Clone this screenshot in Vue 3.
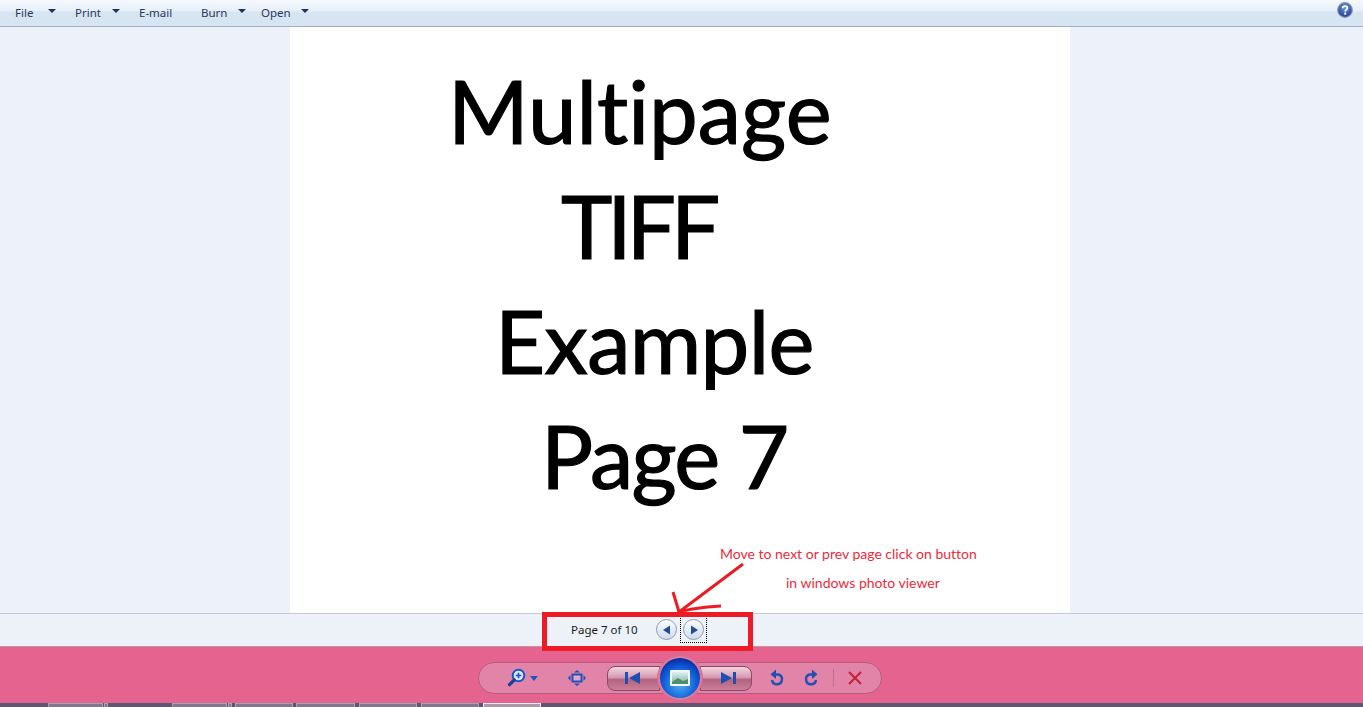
<script setup>
const menus = [
  { label: 'File', width: 60, caret: true, gap: 15 },
  { label: 'Print', width: 64, caret: true, gap: 11 },
  { label: 'E-mail', width: 62, caret: false, gap: 0 },
  { label: 'Burn', width: 60, caret: true, gap: 11 },
  { label: 'Open', width: 60, caret: true, gap: 10 }
]
const lines = [
  { text: 'Multipage', cls: 'l1' },
  { text: 'TIFF', cls: 'l2' },
  { text: 'Example', cls: 'l3' },
  { text: 'Page 7', cls: 'l4' }
]
const tabs = [
  [48, 55], [104, 4], [172, 55], [228, 4], [235, 58], [296, 59], [359, 58], [421, 58], [483, 58]
]
</script>

<template>
  <div class="viewer">
    <header class="menubar">
      <nav class="menus">
        <div v-for="m in menus" :key="m.label" class="menu" :style="{ width: m.width + 'px' }">
          <span>{{ m.label }}</span>
          <i v-if="m.caret" class="caret" :style="{ marginLeft: m.gap + 'px' }"></i>
        </div>
      </nav>
      <svg class="help" width="16" height="16" viewBox="0 0 16 16">
        <defs>
          <radialGradient id="hg" cx="50%" cy="35%" r="70%">
            <stop offset="0" stop-color="#6f9ae0" />
            <stop offset="1" stop-color="#16308f" />
          </radialGradient>
        </defs>
        <circle cx="8" cy="8" r="7.3" fill="url(#hg)" stroke="#8a93a6" stroke-width="1.2" />
        <path d="M5.6 6.2C5.7 4.9 6.7 4.2 8 4.2c1.4 0 2.4.8 2.4 1.9 0 1.8-2.2 1.7-2.2 3.3" fill="none" stroke="#fff" stroke-width="1.7" />
        <rect x="7.2" y="10.6" width="2" height="2" fill="#fff" />
      </svg>
    </header>

    <main class="stage">
      <section class="page">
        <div v-for="l in lines" :key="l.text" class="line" :class="l.cls">{{ l.text }}</div>
      </section>
    </main>

    <div class="pager">
      <span class="count">Page 7 of 10</span>
      <button class="round">
        <svg width="10" height="10" viewBox="0 0 10 10"><path d="M8 0.5V9.5L1 5Z" fill="#1d4f91" /></svg>
      </button>
      <span class="focus">
        <button class="round">
          <svg width="10" height="10" viewBox="0 0 10 10"><path d="M2 0.5V9.5L9 5Z" fill="#1d4f91" /></svg>
        </button>
      </span>
    </div>

    <footer class="controls">
      <div class="pill">
        <div class="zoom">
          <svg width="20" height="20" viewBox="0 0 20 20">
            <circle cx="11.5" cy="7.5" r="5.8" fill="#dce9fa" stroke="#1a55c8" stroke-width="2" />
            <path d="M8.7 7.5h5.6M11.5 4.7v5.6" stroke="#1a55c8" stroke-width="1.7" />
            <path d="M7.2 12L2.5 16.7" stroke="#1c3f96" stroke-width="3.2" stroke-linecap="round" />
          </svg>
          <svg width="8" height="5" viewBox="0 0 8 5"><path d="M0 0H8L4 5Z" fill="#2255c4" /></svg>
        </div>
        <svg class="fit" width="18" height="16" viewBox="0 0 18 16">
          <path d="M6 2.5H12L9 0ZM6 13.5H12L9 16ZM2.5 5V11L0 8ZM15.5 5V11L18 8Z" fill="#1f50c0" />
          <rect x="4.5" y="4.5" width="9" height="7" fill="#e7a6c0" stroke="#1f50c0" stroke-width="2" />
        </svg>
        <div class="transport">
          <button class="seg left">
            <svg width="16" height="12" viewBox="0 0 16 12"><path d="M0 0H3V12H0ZM15 0V12L4 6Z" fill="#1a4fb4" /></svg>
          </button>
          <div class="play">
            <div class="orb">
              <svg width="20" height="16" viewBox="0 0 20 16">
                <defs>
                  <linearGradient id="sky" x1="0" y1="0" x2="0" y2="1">
                    <stop offset="0" stop-color="#dff0f5" />
                    <stop offset="1" stop-color="#7fb59a" />
                  </linearGradient>
                </defs>
                <rect width="20" height="16" rx="1" fill="#f4f7f8" />
                <rect x="2" y="2" width="16" height="12" fill="url(#sky)" />
                <path d="M2 12L8 8L13 11L18 9V14H2Z" fill="#4f8f6c" />
              </svg>
            </div>
          </div>
          <button class="seg right">
            <svg width="16" height="12" viewBox="0 0 16 12"><path d="M16 0H13V12H16ZM1 0V12L12 6Z" fill="#1a4fb4" /></svg>
          </button>
        </div>
        <svg class="rot" width="16" height="18" viewBox="0 0 16 18">
          <path d="M5 5.5H9.5A5 5 0 1 1 3 11" fill="none" stroke="#1f4fb8" stroke-width="2.4" />
          <path d="M7 0.5V10L1.5 5.3Z" fill="#1f4fb8" />
        </svg>
        <svg class="rot r2" width="16" height="18" viewBox="0 0 16 18">
          <path d="M11 5.5H6.5A5 5 0 1 0 13 11" fill="none" stroke="#1f4fb8" stroke-width="2.4" />
          <path d="M9 0.5V10L14.5 5.3Z" fill="#1f4fb8" />
        </svg>
        <i class="divider"></i>
        <svg class="close" width="14" height="14" viewBox="0 0 14 14">
          <path d="M1 1L13 13M13 1L1 13" stroke="#c0213c" stroke-width="2" />
        </svg>
      </div>
    </footer>

    <div class="taskbar">
      <i v-for="(t, i) in tabs" :key="i" class="tab" :class="{ active: i === 8 }" :style="{ left: t[0] + 'px', width: t[1] + 'px' }"></i>
    </div>

    <div class="note n1">Move to next or prev page click on button</div>
    <div class="note n2">in windows photo viewer</div>
    <div class="redbox"></div>
    <svg class="arrow" width="90" height="60" viewBox="0 0 90 60">
      <path d="M75 3L11 51M11 51L5 31M11 51C24 47 38 46 53 45" fill="none" stroke="#ed1c24" stroke-width="3" />
    </svg>
  </div>
</template>

<style>
html, body { margin: 0; background: #fff; }
</style>

<style scoped>
.viewer {
  position: relative;
  width: 1363px;
  height: 707px;
  overflow: hidden;
  display: flex;
  flex-direction: column;
  background: #ecf1fa;
  font-family: "Noto Sans", "Open Sans", sans-serif;
}
.menubar {
  height: 26px;
  flex: none;
  display: flex;
  align-items: flex-start;
  justify-content: space-between;
  border-bottom: 1px solid #9fb0c6;
  background: linear-gradient(#f5f9fd 0, #e6eff8 11px, #d7e4f2 12px, #d7e4f2 100%);
}
.menus {
  display: flex;
  padding: 4px 0 0 15px;
}
.menu {
  display: flex;
  align-items: center;
  height: 16px;
  font-size: 11.5px;
  color: #2b3a5c;
  white-space: nowrap;
}
.caret {
  width: 0;
  height: 0;
  border-left: 4px solid transparent;
  border-right: 4px solid transparent;
  border-top: 4px solid #1f3158;
  margin-top: -2px;
}
.help { margin: 2px 10px 0 0; }
.stage {
  height: 586px;
  flex: none;
  display: flex;
  justify-content: flex-start;
  padding-left: 290px;
}
.page {
  width: 780px;
  height: 586px;
  background: #fff;
  color: #000;
  font-family: Lato, "Open Sans", sans-serif;
  font-size: 87px;
  font-variant-ligatures: none;
  line-height: 115px;
  overflow: hidden;
  padding-top: 26px;
  box-sizing: border-box;
}
.line { white-space: nowrap; -webkit-text-stroke: 1.2px #000; }
.l1 { margin-left: 158px; }
.l2 { margin-left: 271px; letter-spacing: -5px; }
.l3 { margin-left: 205px; letter-spacing: -0.7px; }
.l4 { margin-left: 251px; letter-spacing: -1.8px; }
.pager {
  flex: none;
  display: flex;
  align-items: center;
  border-top: 1px solid #c3c8d2;
  background: #edf2f9;
  padding-left: 571px;
  padding-bottom: 1px;
  box-sizing: content-box;
  height: 31px;
}
.count {
  font-size: 11.5px;
  color: #1a1a1a;
  width: 85px;
  white-space: nowrap;
}
.round {
  width: 21px;
  height: 21px;
  border-radius: 50%;
  border: 1px solid #8f9bb0;
  padding: 0;
  display: flex;
  align-items: center;
  justify-content: center;
  background: linear-gradient(#fafcff, #cfdcee);
}
.focus {
  margin-left: 3px;
  padding: 2px;
  border: 1px dotted #000;
  line-height: 0;
}
.controls {
  height: 57px;
  flex: none;
  box-sizing: border-box;
  background: #e5648f;
  display: flex;
  justify-content: flex-start;
  padding: 15px 0 0 478px;
  border-top: 1px solid #c9909f;
}
.pill {
  width: 404px;
  height: 32px;
  box-sizing: border-box;
  border: 1px solid #b85a80;
  border-radius: 16px;
  background: #e284a8;
  display: flex;
  align-items: center;
  position: relative;
}
.zoom {
  display: flex;
  align-items: center;
  gap: 3px;
  margin-left: 28px;
}
.fit { margin-left: 30px; }
.transport {
  display: flex;
  align-items: center;
  margin-left: 21px;
  width: 145px;
}
.seg {
  height: 25px;
  padding: 0;
  border: 1px solid #8b4a63;
  display: flex;
  align-items: center;
  justify-content: center;
  background: linear-gradient(#f1d5df 0, #d79ab2 45%, #b5627f 55%, #c98098 100%);
}
.seg.left { border-radius: 8px 0 0 8px; width: 53px; padding-right: 2px; }
.seg.right { border-radius: 0 8px 8px 0; width: 52px; padding-left: 4px; }
.play {
  flex: none;
  width: 46px;
  height: 46px;
  margin: -7px -3px;
  border-radius: 50%;
  background: #e27aa0;
  border: 1px solid #c9708f;
  box-sizing: border-box;
  display: flex;
  align-items: center;
  justify-content: center;
  position: relative;
  z-index: 1;
}
.orb {
  width: 40px;
  height: 40px;
  border-radius: 50%;
  display: flex;
  align-items: center;
  justify-content: center;
  background: radial-gradient(circle at 50% 65%, #4fb0f5 0, #0f5fd8 50%, #04209a 85%, #0a1a80 100%);
}
.rot { margin-left: 17px; }
.r2 { margin-left: 18px; }
.divider {
  width: 1px;
  height: 18px;
  background: #b9708c;
  margin-left: 14px;
}
.close { margin-left: 14px; }
.taskbar {
  height: 6px;
  flex: none;
  position: relative;
  background: #5d5870;
}
.tab {
  position: absolute;
  top: 0;
  height: 6px;
  box-sizing: border-box;
  border: 1px solid #a8a4b0;
  border-bottom: 0;
  background: #7f7a8a;
}
.tab.active { background: #a99aa8; border-color: #f0eef0; }
.note {
  position: absolute;
  font-family: Lato, "Open Sans", sans-serif;
  font-size: 14px;
  font-variant-ligatures: none;
  color: #ee2a3c;
  white-space: nowrap;
}
.n1 { left: 720px; top: 545px; }
.n2 { left: 786px; top: 574px; }
.redbox {
  position: absolute;
  left: 542px;
  top: 612px;
  width: 211px;
  height: 39px;
  box-sizing: border-box;
  border: 5px solid #ed1c24;
}
.arrow {
  position: absolute;
  left: 668px;
  top: 561px;
}
</style>
